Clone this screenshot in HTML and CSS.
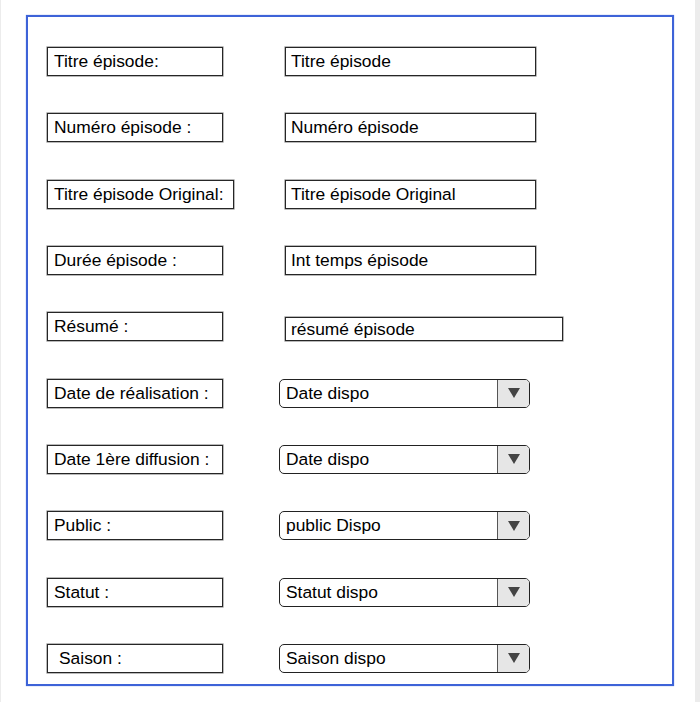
FILE: index.html
```html
<!DOCTYPE html>
<html lang="fr">
<head>
<meta charset="utf-8">
<title>Épisode</title>
<link rel="stylesheet" href="styles.css">
</head>
<body>
<div class="page">
  <form class="frame">
    <div class="label">Titre épisode:</div>
    <div class="field">Titre épisode</div>

    <div class="label">Numéro épisode :</div>
    <div class="field">Numéro épisode</div>

    <div class="label label-wide">Titre épisode Original:</div>
    <div class="field">Titre épisode Original</div>

    <div class="label">Durée épisode :</div>
    <div class="field">Int temps épisode</div>

    <div class="label">Résumé :</div>
    <div class="field field-long">résumé épisode</div>

    <div class="label">Date de réalisation :</div>
    <div class="select"><span class="select-text">Date dispo</span><span class="select-btn"><span class="tri"></span></span></div>

    <div class="label">Date 1ère diffusion :</div>
    <div class="select"><span class="select-text">Date dispo</span><span class="select-btn"><span class="tri"></span></span></div>

    <div class="label">Public :</div>
    <div class="select"><span class="select-text">public Dispo</span><span class="select-btn"><span class="tri"></span></span></div>

    <div class="label">Statut :</div>
    <div class="select"><span class="select-text">Statut dispo</span><span class="select-btn"><span class="tri"></span></span></div>

    <div class="label label-indent">Saison :</div>
    <div class="select"><span class="select-text">Saison dispo</span><span class="select-btn"><span class="tri"></span></span></div>
  </form>
</div>
</body>
</html>
```
FILE: styles.css
```css
html {
  background: #ececec;
}
body {
  margin: 0 5px 0 1px;
  background: #ffffff;
  min-height: 702px;
  font-family: "Liberation Sans", Arial, sans-serif;
  font-size: 17.4px;
  color: #000;
}
.page {
  padding: 15px 0 0 25px;
}
.frame {
  box-sizing: border-box;
  width: 648px;
  height: 671px;
  border: 2px solid #3d63d8;
  box-shadow: 0 0 1px #7f9ae8;
  padding: 30px 0 0 19px;
  display: grid;
  grid-template-columns: 232px 1fr;
  grid-auto-rows: 29px;
  row-gap: 37.33px;
  margin: 0;
}
.label,
.field {
  box-sizing: border-box;
  border: 1px solid #262626;
  box-shadow: 0 0 0 0.6px #8a8a8a;
  display: flex;
  align-items: center;
  white-space: nowrap;
  height: 29px;
}
.label {
  width: 176px;
  padding-left: 6px;
}
.label-wide {
  width: 187px;
}
.label-indent {
  padding-left: 11px;
}
.field {
  width: 251px;
  margin-left: 6px;
  padding-left: 5px;
}
.field-long {
  width: 278px;
  height: 24px;
  align-self: end;
}
.select {
  box-sizing: border-box;
  width: 251px;
  height: 29px;
  border: 1px solid #222;
  border-radius: 5px;
  display: flex;
  overflow: hidden;
}
.select-text {
  flex: 1;
  display: flex;
  align-items: center;
  padding-left: 6px;
  white-space: nowrap;
}
.select-btn {
  width: 31px;
  border-left: 1px solid #555;
  background: #e6e6e6;
  display: flex;
  align-items: center;
  justify-content: center;
}
.tri {
  width: 0;
  height: 0;
  border-left: 6px solid transparent;
  border-right: 6px solid transparent;
  border-top: 10px solid #444;
}
```
